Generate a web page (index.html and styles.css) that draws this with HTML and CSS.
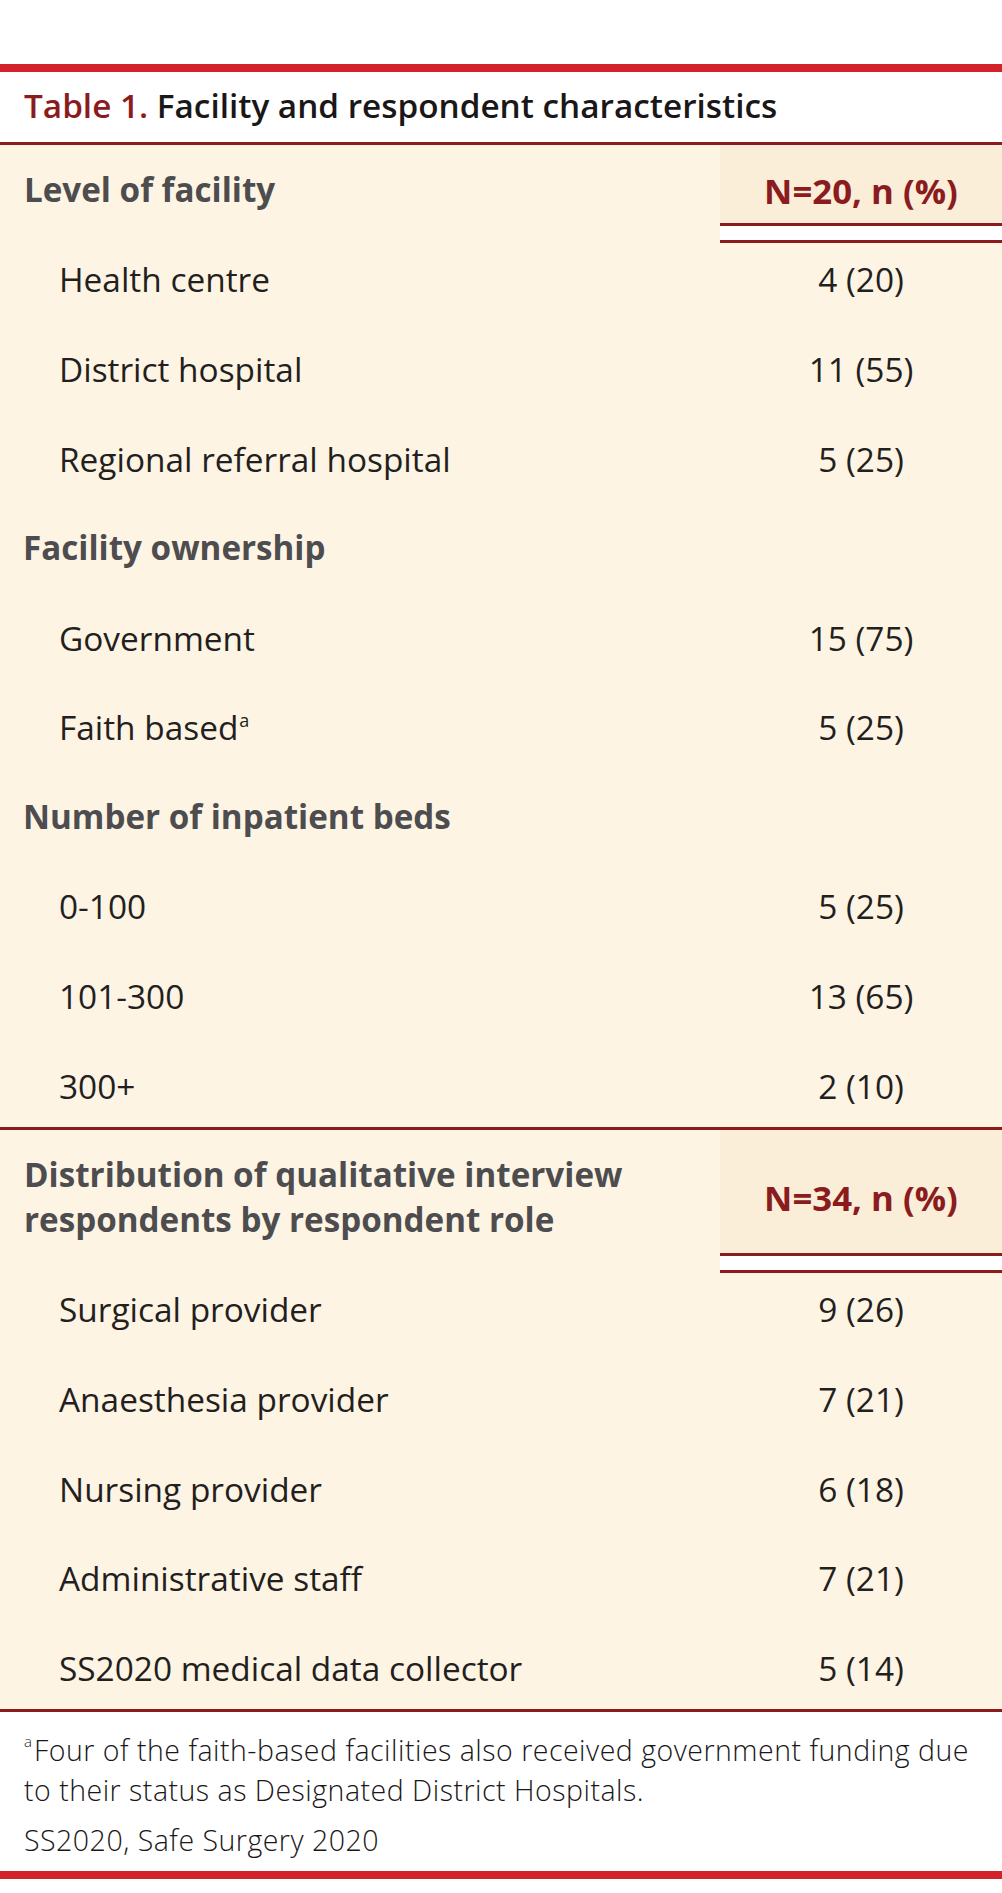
FILE: index.html
```html
<!DOCTYPE html>
<html lang="en">
<head>
<meta charset="utf-8">
<title>Table 1. Facility and respondent characteristics</title>
<link rel="stylesheet" href="styles.css">
</head>
<body>
<div class="page">
  <div class="top-space"></div>
  <div class="bar"></div>
  <div class="caption"><span class="caption-label">Table 1.</span> Facility and respondent characteristics</div>

  <div class="table">
    <section class="group">
      <div class="head">
        <div class="head-label">Level of facility</div>
        <div class="head-value">
          <div class="head-n">N=20, n (%)</div>
          <div class="double-rule"></div>
        </div>
      </div>
      <div class="rows">
        <div class="row"><div class="cell-label">Health centre</div><div class="cell-value">4 (20)</div></div>
        <div class="row"><div class="cell-label">District hospital</div><div class="cell-value">11 (55)</div></div>
        <div class="row"><div class="cell-label">Regional referral hospital</div><div class="cell-value">5 (25)</div></div>
        <div class="row row-sub"><div class="cell-label">Facility ownership</div><div class="cell-value"></div></div>
        <div class="row"><div class="cell-label">Government</div><div class="cell-value">15 (75)</div></div>
        <div class="row"><div class="cell-label">Faith based<sup class="sup">a</sup></div><div class="cell-value">5 (25)</div></div>
        <div class="row row-sub"><div class="cell-label">Number of inpatient beds</div><div class="cell-value"></div></div>
        <div class="row"><div class="cell-label">0-100</div><div class="cell-value">5 (25)</div></div>
        <div class="row"><div class="cell-label">101-300</div><div class="cell-value">13 (65)</div></div>
        <div class="row"><div class="cell-label">300+</div><div class="cell-value">2 (10)</div></div>
      </div>
    </section>

    <section class="group">
      <div class="head">
        <div class="head-label">Distribution of qualitative interview respondents by respondent role</div>
        <div class="head-value">
          <div class="head-n">N=34, n (%)</div>
          <div class="double-rule"></div>
        </div>
      </div>
      <div class="rows">
        <div class="row"><div class="cell-label">Surgical provider</div><div class="cell-value">9 (26)</div></div>
        <div class="row"><div class="cell-label">Anaesthesia provider</div><div class="cell-value">7 (21)</div></div>
        <div class="row"><div class="cell-label">Nursing provider</div><div class="cell-value">6 (18)</div></div>
        <div class="row"><div class="cell-label">Administrative staff</div><div class="cell-value">7 (21)</div></div>
        <div class="row"><div class="cell-label">SS2020 medical data collector</div><div class="cell-value">5 (14)</div></div>
      </div>
    </section>
  </div>

  <div class="notes">
    <p class="note"><sup class="note-sup">a</sup>Four of the faith-based facilities also received government funding due to their status as Designated District Hospitals.</p>
    <p class="note note-abbr">SS2020, Safe Surgery 2020</p>
  </div>
  <div class="bar bar-bottom"></div>
</div>
</body>
</html>
```

FILE: styles.css
```css
* {
  box-sizing: border-box;
}

html, body {
  margin: 0;
  padding: 0;
  background: #ffffff;
}

body {
  font-family: "Open Sans", "Noto Sans", "Liberation Sans", sans-serif;
  color: #231f20;
}

.page {
  width: 1002px;
}

.top-space {
  height: 64px;
}

.bar {
  height: 8px;
  background: #d2232a;
}

.bar-bottom {
  box-shadow: 0 1px 0 #f2c6c8;
}

.caption {
  padding: 11px 24px 14px;
  font-size: 33.3px;
  line-height: 45px;
  font-weight: 600;
  color: #1a1718;
}

.caption-label {
  color: #8b1c1e;
}

.table {
  background: #fdf4e4;
  border-bottom: 3px solid #8b1c1e;
}

.group {
  border-top: 3px solid #8b1c1e;
}

.head {
  display: grid;
  grid-template-columns: 720px 1fr;
}

.head-label {
  padding: 22px 24px 31px;
  font-size: 33.2px;
  line-height: 45px;
  font-weight: 700;
  color: #4d4c4e;
}

.head-value {
  display: flex;
  flex-direction: column;
}

.head-n {
  flex: 1;
  display: flex;
  align-items: center;
  justify-content: center;
  padding-top: 13px;
  background: #fbeed9;
  font-size: 34.8px;
  font-weight: 700;
  color: #8b1c1e;
}

.double-rule {
  height: 20px;
  border-top: 3px solid #8b1c1e;
  border-bottom: 3px solid #8b1c1e;
  background: #ffffff;
}

.row {
  display: grid;
  grid-template-columns: 720px 1fr;
  padding: 16.4px 0 33.2px;
  font-size: 33.4px;
  line-height: 40px;
}

.row:last-child {
  padding-bottom: 21.4px;
}

.cell-label {
  padding-left: 59px;
  white-space: nowrap;
}

.cell-value {
  text-align: center;
}

.row-sub .cell-label {
  padding-left: 23px;
  font-size: 33.2px;
  font-weight: 700;
  color: #4d4c4e;
}

.sup {
  font-size: 18px;
  line-height: 0;
  vertical-align: 13px;
  margin-left: 1px;
}

.notes {
  padding: 18px 10px 11px 24px;
}

.note {
  margin: 0;
  font-size: 28.5px;
  line-height: 40px;
  font-weight: 300;
  letter-spacing: 0.5px;
  color: #1a1718;
}

.note-abbr {
  margin-top: 10px;
}

.note-sup {
  display: inline-block;
  font-size: 15px;
  line-height: 15px;
  vertical-align: 14px;
  margin-right: 2px;
  letter-spacing: 0;
}
```
